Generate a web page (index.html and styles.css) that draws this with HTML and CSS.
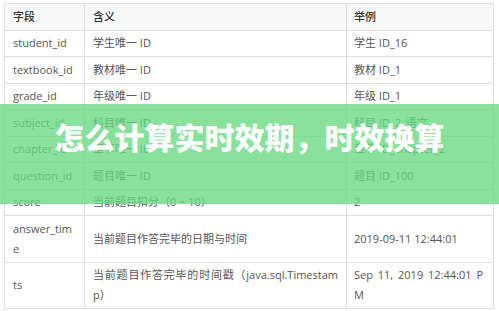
FILE: index.html
```html
<!DOCTYPE html>
<html lang="zh-CN">
  <head>
    <meta charset="utf-8">
    <title>怎么计算实时效期，时效换算</title>
    <link rel="stylesheet" href="styles.css">
  </head>
  <body>
    <main class="page">
      <table class="fields">
        <colgroup>
          <col class="col-name">
          <col class="col-desc">
          <col class="col-demo">
        </colgroup>
        <thead>
          <tr>
            <th>字段</th>
            <th>含义</th>
            <th>举例</th>
          </tr>
        </thead>
        <tbody>
          <tr>
            <td>student_id</td>
            <td>学生唯一 ID</td>
            <td>学生 ID_16</td>
          </tr>
          <tr>
            <td>textbook_id</td>
            <td>教材唯一 ID</td>
            <td>教材 ID_1</td>
          </tr>
          <tr>
            <td>grade_id</td>
            <td>年级唯一 ID</td>
            <td>年级 ID_1</td>
          </tr>
          <tr>
            <td>subject_id</td>
            <td>科目唯一 ID</td>
            <td>科目 ID_2_语文</td>
          </tr>
          <tr>
            <td>chapter_id</td>
            <td>章节唯一 ID</td>
            <td>章节 ID_chapter_2</td>
          </tr>
          <tr>
            <td>question_id</td>
            <td>题目唯一 ID</td>
            <td>题目 ID_100</td>
          </tr>
          <tr>
            <td>score</td>
            <td>当前题目扣分（0 ~ 10）</td>
            <td>2</td>
          </tr>
          <tr>
            <td>answer_time</td>
            <td>当前题目作答完毕的日期与时间</td>
            <td>2019-09-11 12:44:01</td>
          </tr>
          <tr>
            <td>ts</td>
            <td>当前题目作答完毕的时间戳（java.sql.Timestamp）</td>
            <td>Sep 11, 2019 12:44:01 PM</td>
          </tr>
        </tbody>
      </table>
      <div class="banner">
        <h1 class="banner-title">怎么计算实时效期，时效换算</h1>
      </div>
    </main>
  </body>
</html>
```

FILE: styles.css
```css
html, body{
  margin : 0;
  background : #fff;
}
.page{
  position : relative;
  padding : 3px 6px 0 4px;
  font-family : "Open Sans", "Noto Sans CJK SC", sans-serif;
}
.fields{
  width : 489px;
  border-collapse : collapse;
  table-layout : fixed;
  font-size : 11px;
  line-height : 20px;
  color : #555;
}
.col-name{ width : 80px; }
.col-desc{ width : 262px; }
.col-demo{ width : 147px; }

.fields th,
.fields td{
  border : 1px solid #dedede;
  padding : 2.75px 8px 2.75px 8px;
  text-align : justify;
  word-break : break-all;
  vertical-align : middle;
}
.fields th{
  background : #f8f8f8;
  color : #333;
  font-weight : 500;
}
.fields td:last-child,
.fields th:last-child{
  padding-left : 7px;
  padding-right : 10px;
}

/* green title strip laid over the table */
.banner{
  position : absolute;
  left : 0;
  right : 0;
  top : 104px;
  height : 100px;
  background : rgba(102, 218, 128, 0.78);
}
.banner-title{
  margin : 0;
  padding-top : 14px;
  text-align : center;
  color : #fff;
  font-family : "Noto Sans CJK SC", sans-serif;
  font-size : 30px;
  font-weight : 900;
  line-height : 36px;
  letter-spacing : 0;
}
```
